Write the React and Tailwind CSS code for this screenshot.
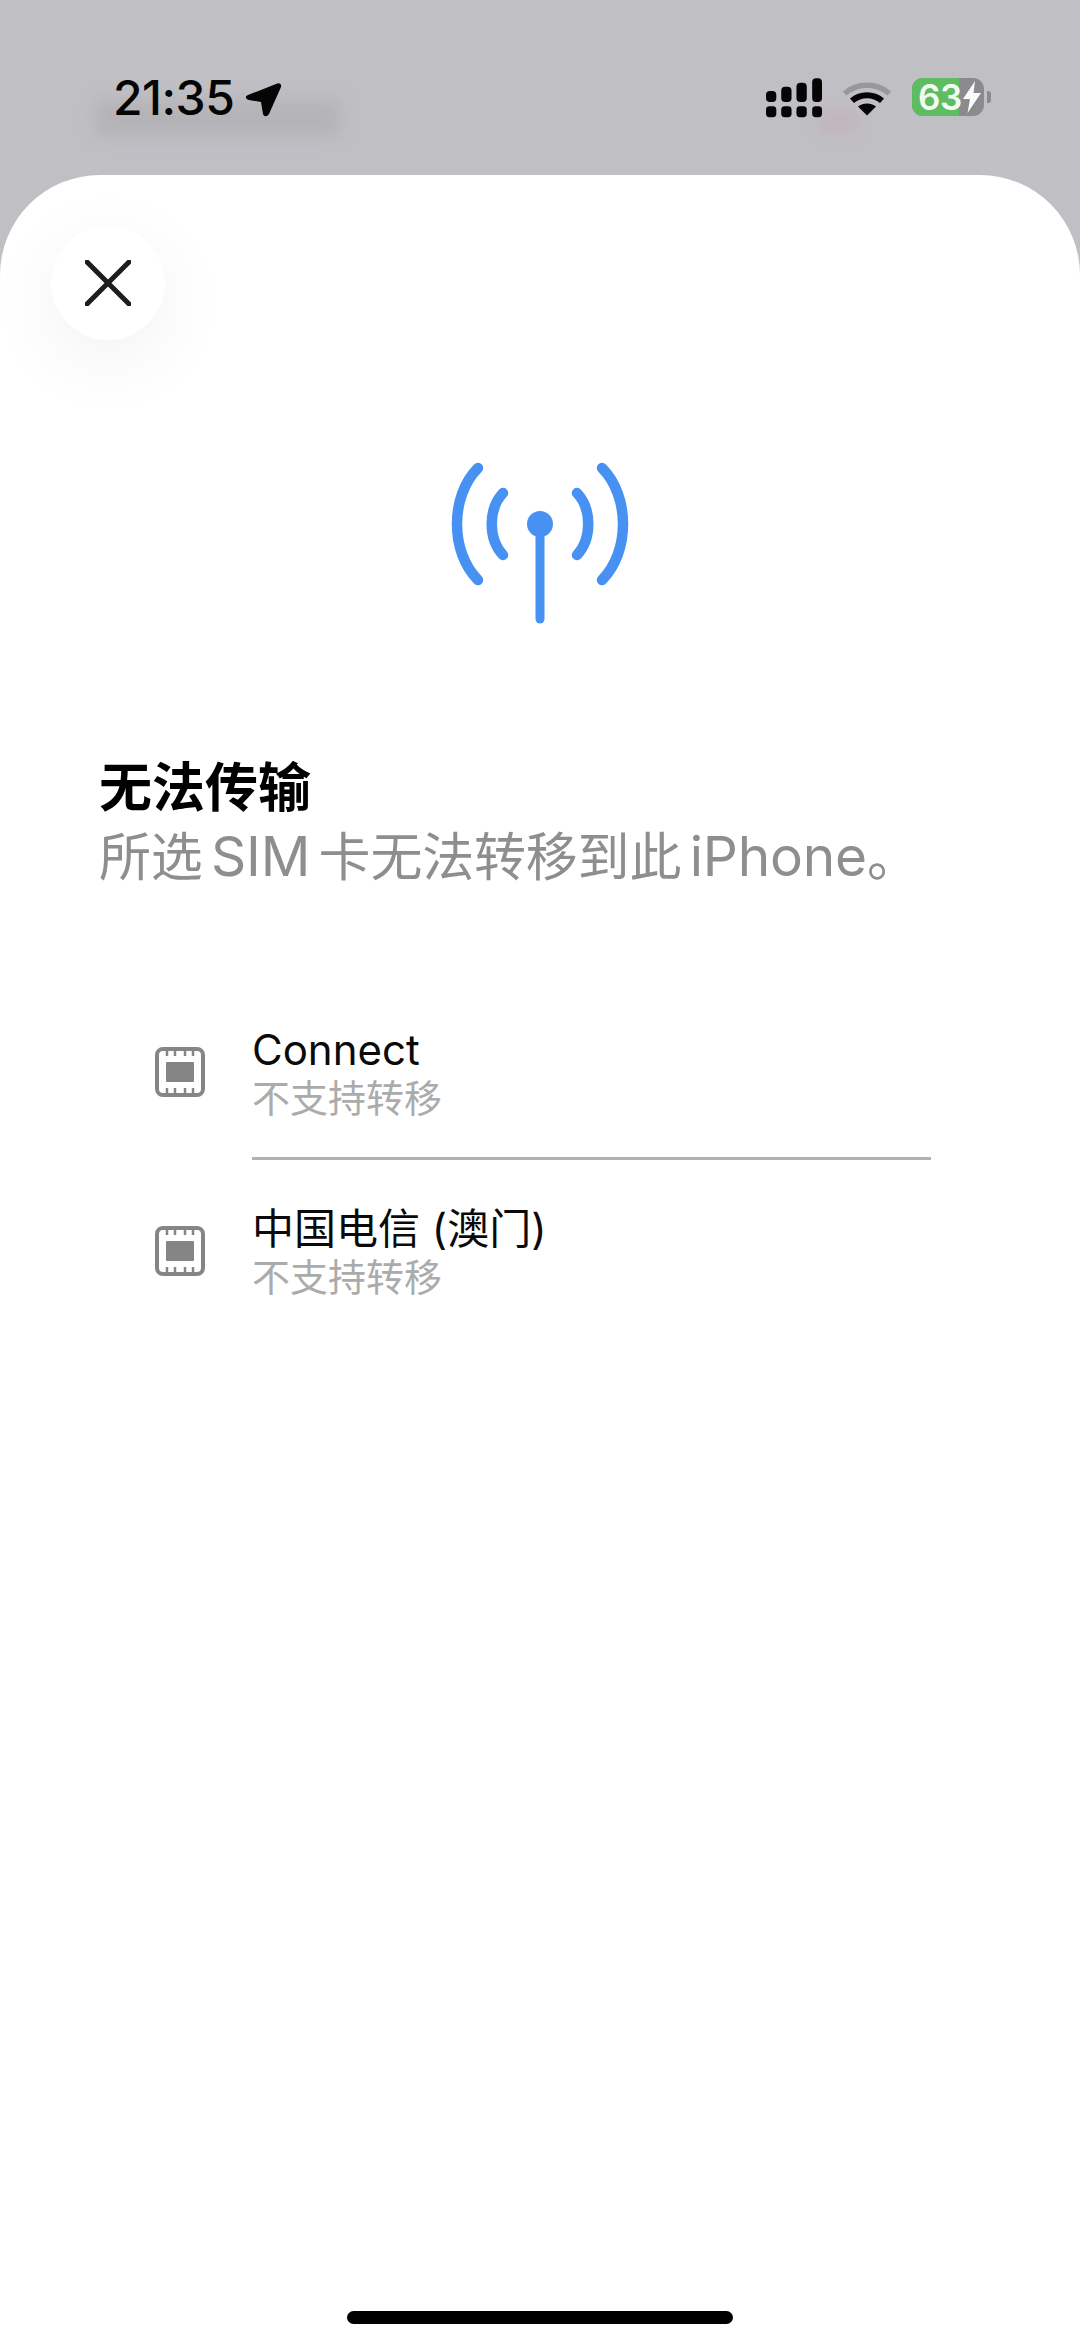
const CJK = "font-['Inter','Noto_Sans_CJK_SC',sans-serif]";

function Signal() {
  return (
    <svg width="56" height="40" viewBox="0 0 57 40" fill="#050505" className="block">
      <rect x="0" y="13" width="10.5" height="11" rx="4" />
      <rect x="15.5" y="8.5" width="10.5" height="15.5" rx="4" />
      <rect x="31" y="4.5" width="10.5" height="19.5" rx="4" />
      <rect x="47" y="0" width="10" height="24" rx="4" />
      <rect x="0" y="28.5" width="10.5" height="11" rx="3.5" />
      <rect x="15.5" y="28.5" width="10.5" height="11" rx="3.5" />
      <rect x="31" y="28.5" width="10.5" height="11" rx="3.5" />
      <rect x="47" y="28.5" width="10" height="11" rx="3.5" />
    </svg>
  );
}

function Wifi() {
  return (
    <svg width="50" height="38" viewBox="0 0 50 38" className="block">
      <path d="M1 13.5C14 1.5 36 1.5 49 13.5L45.5 17.5C34.5 7.5 15.5 7.5 4.5 17.5Z" fill="#98979b" />
      <path d="M8 20.5C17.5 12 32.5 12 42 20.5L38 25C30.5 18.5 19.5 18.5 12 25Z" fill="#050505" />
      <path d="M16 28.5C21 24.5 29 24.5 34 28.5L25 37.5Z" fill="#050505" />
    </svg>
  );
}

function Battery() {
  return (
    <div className="flex items-center gap-[3px]">
      <div className="relative flex h-[38px] w-[72px] items-center rounded-[11px] bg-[#8b8a8e]">
        <div className="h-full w-[47px] rounded-l-[11px] bg-[#5ebc61]" />
        <span className="absolute left-[6px] top-0 font-['Inter',sans-serif] text-[35px] font-semibold leading-[38px] tracking-[-0.5px] text-[#f2fbf2]">63</span>
        <svg width="20" height="32" viewBox="0 0 20 32" fill="#fbfbfb" className="absolute left-[50px] top-[3px]">
          <path d="M13 0 1 18h7L5.5 32 19 12h-7.5Z" />
        </svg>
      </div>
      <div className="h-[12px] w-[4px] rounded-r-[3px] bg-[#8b8a8e]" />
    </div>
  );
}

function Antenna() {
  return (
    <svg width="180" height="164" viewBox="0 0 180 164" fill="none" className="block">
      <g stroke="#4791f3" strokeWidth="10.5" strokeLinecap="round">
        <path d="M28 7C0 35 0 91 28 119" />
        <path d="M152 7C180 35 180 91 152 119" />
        <path d="M53 32C38 48 38 78 53 94" />
        <path d="M127 32C142 48 142 78 127 94" />
      </g>
      <path d="M90 63V158" stroke="#4791f3" strokeWidth="9" strokeLinecap="round" />
      <circle cx="90" cy="63" r="13" fill="#4791f3" />
    </svg>
  );
}

function Sim() {
  return (
    <svg width="50" height="50" viewBox="0 0 50 50" fill="none" className="block">
      <rect x="2" y="2" width="46" height="46" rx="6" stroke="#858585" strokeWidth="4" />
      <rect x="11" y="15" width="28" height="20" rx="1" fill="#858585" />
      <g stroke="#858585" strokeWidth="2.5">
        <path d="M12 4v5M20 4v5M30 4v5M38 4v5" />
        <path d="M12 41v5M20 41v5M30 41v5M38 41v5" />
      </g>
    </svg>
  );
}

function Row({ name }) {
  return (
    <div className="flex items-center">
      <div className="flex w-[99px] shrink-0 justify-start pl-[2px]">
        <Sim />
      </div>
      <div className="flex-1 pt-[2px]">
        <div className="text-[42px] leading-[50px] text-[#0a0a0a]">{name}</div>
        <div className="text-[38px] leading-[46px] text-[#ababab]">不支持转移</div>
      </div>
    </div>
  );
}

export default function App() {
  return (
    <div className={`relative flex h-[2345px] w-[1080px] flex-col overflow-hidden bg-[#c0bfc4] ${CJK}`}>
      <header className="relative h-[175px] shrink-0">
        <div className="absolute left-[95px] top-[100px] h-[36px] w-[245px] bg-[#b4b3b8] blur-[8px]" />
        <div className="absolute left-[818px] top-[112px] h-[20px] w-[40px] bg-[#c4a9b4] opacity-50 blur-[8px]" />
        <div className="relative flex items-start justify-between pl-[113px] pr-[89px] pt-[78px]">
          <div className="flex items-center gap-[10px]">
            <span className="text-[48px] font-medium leading-[40px] tracking-[-0.5px] text-[#050505]">21:35</span>
            <svg width="38" height="38" viewBox="0 0 38 38" fill="#050505" className="block">
              <path d="M32 5C35 3 38 5 37 8L25 35C23 38 20 38 19 35L17 23 5 21C1 20 1 17 4 16Z" />
            </svg>
          </div>
          <div className="flex items-start gap-[20px]">
            <Signal />
            <Wifi />
            <Battery />
          </div>
        </div>
      </header>
      <main className="flex flex-1 flex-col rounded-t-[100px] bg-white">
        <div className="pl-[51px] pt-[51px]">
          <button className="flex h-[114px] w-[114px] items-center justify-center rounded-full bg-white shadow-[0_20px_80px_rgba(0,0,0,0.06)]">
            <svg width="46" height="46" viewBox="0 0 46 46" stroke="#1d1d1d" strokeWidth="5" strokeLinecap="round" className="block">
              <path d="M2 2 44 44M44 2 2 44" />
            </svg>
          </button>
        </div>
        <div className="flex justify-center pt-[121px]">
          <Antenna />
        </div>
        <div className="pl-[99px] pt-[132px]">
          <h1 className="text-[53px] font-bold leading-[62px] text-black">无法传输</h1>
          <p className="mt-[4px] whitespace-nowrap text-[52px] font-normal leading-[66px] tracking-[-0.2px] text-[#8e8e8e] [word-spacing:-6px]">
            所选 <span className="text-[55px]">SIM</span> 卡无法转移到此 <span className="text-[55px]">iPhone</span>。
          </p>
        </div>
        <div className="pl-[153px] pr-[149px] pt-[132px]">
          <Row name="Connect" />
          <div className="ml-[99px] mb-[42px] mt-[36px] h-[3px] bg-[#b2b2b2]" />
          <Row name="中国电信 (澳门)" />
        </div>
        <div className="mt-auto flex justify-center pb-[21px]">
          <div className="h-[13px] w-[386px] rounded-full bg-black" />
        </div>
      </main>
    </div>
  );
}
